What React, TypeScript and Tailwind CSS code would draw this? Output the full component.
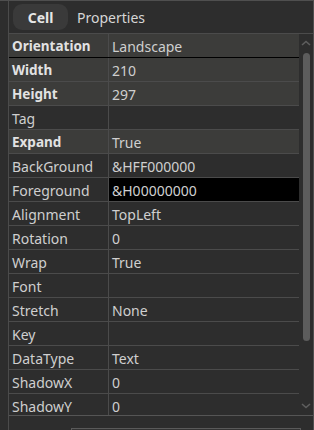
import React from "react";

type Row = { label: string; value: string; bold?: boolean; selected?: boolean };

const ROWS: Row[] = [
  { label: "Orientation", value: "Landscape", bold: true },
  { label: "Width", value: "210", bold: true },
  { label: "Height", value: "297", bold: true },
  { label: "Tag", value: "" },
  { label: "Expand", value: "True", bold: true },
  { label: "BackGround", value: "&HFF000000" },
  { label: "Foreground", value: "&H00000000", selected: true },
  { label: "Alignment", value: "TopLeft" },
  { label: "Rotation", value: "0" },
  { label: "Wrap", value: "True" },
  { label: "Font", value: "" },
  { label: "Stretch", value: "None" },
  { label: "Key", value: "" },
  { label: "DataType", value: "Text" },
  { label: "ShadowX", value: "0" },
  { label: "ShadowY", value: "0" },
];

const PropertyRow: React.FC<{ row: Row; first: boolean }> = ({ row, first }) => {
  const rowBg = row.bold ? "bg-[#3c3c3a]" : "bg-[#2d2d2d]";
  const border = first ? "border-black" : "border-[#4b4b4b]";
  return (
    <div className={`flex h-[24px] shrink-0 border-b ${border} ${rowBg}`}>
      <div
        className={`w-[100px] shrink-0 border-r border-[#4b4b4b] pl-[3px] pt-[1px] flex items-center ${
          row.bold ? "font-bold text-[13.5px] text-[#e2e2e2]" : "text-[#cfcfcf]"
        }`}
      >
        {row.label}
      </div>
      <div
        className={`flex-1 pl-[3px] pt-[1px] flex items-center text-[#cfcfcf] ${
          row.selected ? "bg-black" : ""
        }`}
      >
        {row.value}
      </div>
    </div>
  );
};

const App: React.FC = () => {
  return (
    <div
      className="w-[314px] h-[430px] bg-[#2d2d2d] flex overflow-hidden border-t border-r border-[#4f4f4f] text-[14px]"
      style={{ fontFamily: '"Noto Sans", "Open Sans", sans-serif' }}
    >
      {/* Left strip */}
      <div className="w-[9px] shrink-0 border-r border-[#4b4b4b]" />

      <div className="flex-1 flex flex-col min-w-0">
        {/* Tabs */}
        <div className="h-[33px] shrink-0 border-b border-[#4b4b4b] flex items-center pl-[4px] gap-[9px]">
          <div className="h-[26px] w-[55px] rounded-[9px] bg-[#3a3a3a] flex items-center justify-center font-bold text-[#e6e6e6] text-[14px]">
            Cell
          </div>
          <div className="text-[#d6d6d6] text-[14px]">Properties</div>
        </div>

        {/* Property grid */}
        <div className="h-[382px] shrink-0 flex border-b border-[#555555]">
          <div className="w-[290px] shrink-0 flex flex-col overflow-hidden">
            {ROWS.map((row, i) => (
              <PropertyRow key={row.label} row={row} first={i === 0} />
            ))}
          </div>

          {/* Scrollbar */}
          <div className="flex-1 flex flex-col items-center">
            <svg width="10" height="6" viewBox="0 0 10 6" className="mt-[6px]">
              <path d="M1 5 L5 1.5 L9 5" fill="none" stroke="#5e5e5e" strokeWidth="1.6" />
            </svg>
            <div className="w-[7px] h-[288px] mt-[7px] rounded-[4px] bg-[#5c5c5c]" />
            <div className="flex-1" />
            <svg width="10" height="6" viewBox="0 0 10 6" className="mb-[6px]">
              <path d="M1 1 L5 4.5 L9 1" fill="none" stroke="#5e5e5e" strokeWidth="1.6" />
            </svg>
          </div>
        </div>

        {/* Bottom area */}
        <div className="flex-1 pt-[12px] pl-[62px] pr-[12px]">
          <div className="h-full border-t border-l border-r border-[#5a5a5a] bg-[#333333]" />
        </div>
      </div>
    </div>
  );
};

export default App;
